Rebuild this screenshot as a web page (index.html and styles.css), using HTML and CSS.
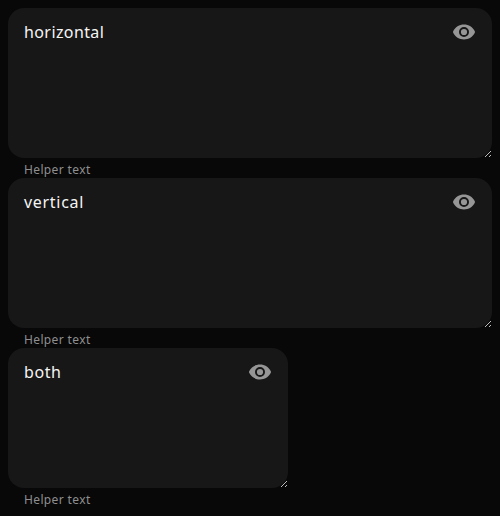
FILE: index.html
```html
<!DOCTYPE html>
<html lang="en">
<head>
<meta charset="utf-8">
<title>Text areas</title>
<link rel="stylesheet" href="styles.css">
</head>
<body>
<svg class="symbols" aria-hidden="true">
  <symbol id="eye" viewBox="0 0 24 24"><path fill="currentColor" fill-rule="evenodd" d="M12 4.500C7.300 4.500 3.200 7 1.200 11.200Q.8 12 1.200 12.800C3.200 17 7.300 19.500 12 19.500s8.800-2.500 10.800-6.700q.4-.8 0-1.600C20.800 7 16.700 4.500 12 4.500zM12 17a5 5 0 1 1 0-10 5 5 0 0 1 0 10zm0-8.100a3.100 3.100 0 1 0 0 6.200 3.100 3.100 0 0 0 0-6.200z"/></symbol>
  <symbol id="grip" viewBox="0 0 6 6"><path fill="currentColor" d="M5 0h1v1H5zM4 1h1v1H4zM3 2h1v1H3zM2 3h1v1H2zM1 4h1v1H1zM0 5h1v1H0zM5 4h1v1H5zM4 5h1v1H4z"/></symbol>
</svg>
<main class="fields">
  <section class="field">
    <div class="box">
      <span class="value horizontal">horizontal</span>
      <svg class="eye"><use href="#eye"/></svg>
      <svg class="grip"><use href="#grip"/></svg>
    </div>
    <div class="helper"><span>Helper text</span></div>
  </section>
  <section class="field">
    <div class="box">
      <span class="value vertical">vertical</span>
      <svg class="eye"><use href="#eye"/></svg>
      <svg class="grip"><use href="#grip"/></svg>
    </div>
    <div class="helper"><span>Helper text</span></div>
  </section>
  <section class="field small">
    <div class="box">
      <span class="value both">both</span>
      <svg class="eye"><use href="#eye"/></svg>
      <svg class="grip"><use href="#grip"/></svg>
    </div>
    <div class="helper"><span>Helper text</span></div>
  </section>
</main>
</body>
</html>
```
FILE: styles.css
```css
body {
  margin: 0;
  padding: 8px;
  background: #080808;
  color: #f5f5f5;
  font-family: "Noto Sans", sans-serif;
}

.symbols {
  display: none;
}

.fields {
  display: flex;
  flex-direction: column;
}

.box {
  position: relative;
  display: flex;
  justify-content: space-between;
  align-items: flex-start;
  box-sizing: border-box;
  height: 150px;
  padding: 12px 16px;
  border-radius: 16px;
  background: #171717;
}

.small {
  width: 280px;
}

.small .box {
  height: 140px;
}

.value {
  font-size: 16px;
  line-height: 24px;
}

.horizontal {
  letter-spacing: 0.4px;
}

.vertical {
  letter-spacing: 0.7px;
}

.both {
  letter-spacing: 0.6px;
}

.eye {
  width: 24px;
  height: 24px;
  color: #969696;
}

.grip {
  position: absolute;
  right: 1px;
  bottom: 1px;
  width: 6px;
  height: 6px;
  color: #bdbdbd;
  shape-rendering: crispEdges;
}

.helper {
  height: 20px;
  padding-left: 16px;
  box-sizing: border-box;
  padding-top: 3px;
  color: #8f8f8f;
  font-size: 12px;
  line-height: 17px;
  letter-spacing: 0.37px;
}
```
